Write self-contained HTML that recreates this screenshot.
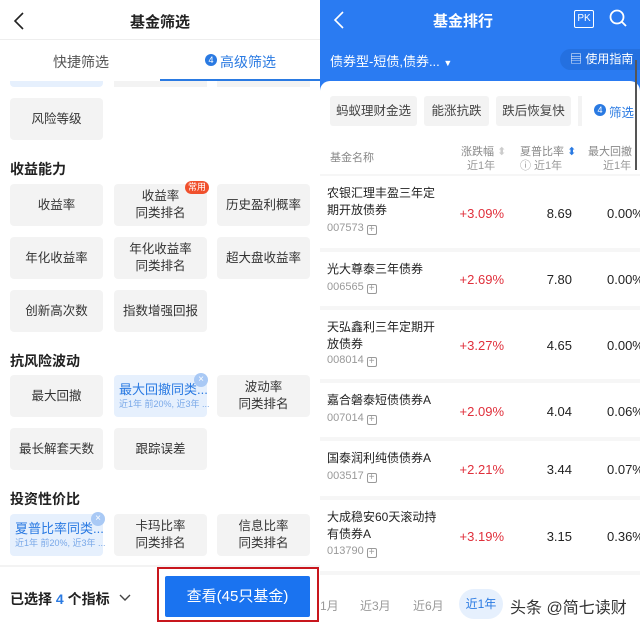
<!DOCTYPE html><html><head><meta charset="utf-8"><style>
*{margin:0;padding:0;box-sizing:border-box}
body{width:640px;height:630px;overflow:hidden;font-family:"Liberation Sans","Noto Sans CJK SC",sans-serif;background:#fff;position:relative}
.a{position:absolute}
.L{left:0;top:0;width:320px;height:630px;background:#fff;overflow:hidden}
.R{left:320px;top:0;width:320px;height:630px;background:#fff;overflow:hidden}
.t{position:absolute;width:93px;height:42px;background:#f3f3f3;border-radius:4px;font-size:12.5px;color:#333;display:flex;flex-direction:column;align-items:center;justify-content:center;line-height:17px;text-align:center}
.t.s{background:#e6f0fd;color:#2a7ae2;align-items:flex-start;padding-left:5px;text-align:left}
.t.s b{font-weight:normal;font-size:13px;white-space:nowrap;line-height:16px}
.t.s i{font-style:normal;font-size:9px;color:#79a8e8;line-height:12px;white-space:nowrap}
.x{position:absolute;width:14px;height:14px;border-radius:7px;background:#a9c9f5;color:#fff;font-size:10px;line-height:14px;text-align:center}
.h{position:absolute;left:10px;font-size:14px;font-weight:bold;color:#222}
.row{position:absolute;left:0;width:320px;border-bottom:4px solid #f6f6f6}
.nm{position:absolute;left:7px;font-size:12px;color:#222;line-height:17px;width:112px}
.cd{position:absolute;left:7px;font-size:11px;color:#999}
.cd span{display:inline-block;width:10px;height:10px;border:1px solid #999;border-radius:2px;font-size:10px;line-height:8px;text-align:center;margin-left:3px;vertical-align:-1px}
.p{position:absolute;right:136px;font-size:13px;color:#e0303c}
.v{position:absolute;right:68px;font-size:13px;color:#222}
.m{position:absolute;left:287px;font-size:13px;color:#222}
</style></head><body>
<div class="a L">
 <svg class="a" style="left:13px;top:12px" width="12" height="18" viewBox="0 0 12 18"><path d="M10 1L2 9l8 8" fill="none" stroke="#222" stroke-width="1.6"/></svg>
 <div class="a" style="left:0;width:320px;top:11px;text-align:center;font-size:15px;font-weight:bold;color:#222">基金筛选</div>
 <div class="a" style="left:0;top:39px;width:320px;height:1px;background:#eee"></div>
 <div class="a" style="left:53px;top:52px;font-size:14px;color:#555">快捷筛选</div>
 <div class="a" style="left:205px;top:54px;width:12px;height:12px;border-radius:6px;background:#2a7ae2;color:#fff;font-size:9px;line-height:12px;text-align:center">4</div>
 <div class="a" style="left:220px;top:52px;font-size:14px;color:#2a7ae2">高级筛选</div>
 <div class="a" style="left:160px;top:79px;width:160px;height:2px;background:#2a7ae2"></div>
 <div class="a" style="left:10px;top:81px;width:93px;height:6px;background:#e6f0fd;border-radius:0 0 4px 4px"></div>
 <div class="a" style="left:114px;top:81px;width:93px;height:6px;background:#f3f3f3"></div>
 <div class="a" style="left:217px;top:81px;width:93px;height:6px;background:#f3f3f3"></div>
 <div class="t" style="left:10px;top:98px">风险等级</div>
 <div class="h" style="top:159px">收益能力</div>
 <div class="t" style="left:10px;top:184px">收益率</div>
 <div class="t" style="left:114px;top:184px">收益率<br>同类排名</div>
 <div class="a" style="left:185px;top:181px;width:24px;height:13px;background:#f0502d;border-radius:7px;color:#fff;font-size:9px;line-height:13px;text-align:center">常用</div>
 <div class="t" style="left:217px;top:184px">历史盈利概率</div>
 <div class="t" style="left:10px;top:237px">年化收益率</div>
 <div class="t" style="left:114px;top:237px">年化收益率<br>同类排名</div>
 <div class="t" style="left:217px;top:237px">超大盘收益率</div>
 <div class="t" style="left:10px;top:290px">创新高次数</div>
 <div class="t" style="left:114px;top:290px">指数增强回报</div>
 <div class="h" style="top:351px">抗风险波动</div>
 <div class="t" style="left:10px;top:375px">最大回撤</div>
 <div class="t s" style="left:114px;top:375px"><b>最大回撤同类...</b><i>近1年 前20%, 近3年 ...</i></div>
 <div class="x" style="left:194px;top:373px">×</div>
 <div class="t" style="left:217px;top:375px">波动率<br>同类排名</div>
 <div class="t" style="left:10px;top:428px">最长解套天数</div>
 <div class="t" style="left:114px;top:428px">跟踪误差</div>
 <div class="h" style="top:489px">投资性价比</div>
 <div class="t s" style="left:10px;top:514px"><b>夏普比率同类...</b><i>近1年 前20%, 近3年 ...</i></div>
 <div class="x" style="left:91px;top:512px">×</div>
 <div class="t" style="left:114px;top:514px">卡玛比率<br>同类排名</div>
 <div class="t" style="left:217px;top:514px">信息比率<br>同类排名</div>
 <div class="a" style="left:0;top:565px;width:320px;height:2px;background:#f3f3f3"></div>
 <div class="a" style="left:10px;top:589px;font-size:14px;font-weight:bold;color:#222">已选择 <span style="color:#2a7ae2">4</span> 个指标</div>
 <svg class="a" style="left:119px;top:594px" width="12" height="8" viewBox="0 0 12 8"><path d="M1 1l5 5 5-5" fill="none" stroke="#444" stroke-width="1.4"/></svg>
 <div class="a" style="left:157px;top:567px;width:162px;height:55px;border:2px solid #c8161d"></div>
 <div class="a" style="left:165px;top:576px;width:145px;height:41px;background:#1a73f0;border-radius:2px;color:#fff;font-size:15px;line-height:41px;text-align:center">查看(45只基金)</div>
</div>
<div class="a R">
 <div class="a" style="left:0;top:0;width:320px;height:95px;background:#2a7bf2"></div>
 <svg class="a" style="left:13px;top:11px" width="12" height="18" viewBox="0 0 12 18"><path d="M10 1L2 9l8 8" fill="none" stroke="#fff" stroke-width="1.6"/></svg>
 <div class="a" style="left:0;width:286px;top:10px;text-align:center;font-size:15px;font-weight:bold;color:#fff">基金排行</div>
 <div class="a" style="left:254px;top:10px;width:20px;height:18px;border:1.5px solid #fff;border-radius:2px;color:#fff;font-size:10px;line-height:15px;text-align:center">PK</div>
 <svg class="a" style="left:289px;top:9px" width="18" height="20" viewBox="0 0 18 20"><circle cx="8" cy="8" r="6.5" fill="none" stroke="#fff" stroke-width="1.8"/><path d="M13 13l4 4" stroke="#fff" stroke-width="1.8"/></svg>
 <div class="a" style="left:10px;top:51px;font-size:13px;color:#fff">债券型-短债,债券... <span style="font-size:9px">▼</span></div>
 <div class="a" style="left:240px;top:49px;width:90px;height:21px;border-radius:11px;background:#2470e0;color:#fff;font-size:12px;line-height:21px;padding-left:10px">▤ 使用指南</div>
 <div class="a" style="left:0;top:81px;width:320px;height:80px;background:#fff;border-radius:10px 10px 0 0"></div>
 <div class="a" style="left:10px;top:96px;width:87px;height:30px;background:#f3f3f3;border-radius:3px;font-size:12.5px;color:#444;line-height:30px;text-align:center">蚂蚁理财金选</div>
 <div class="a" style="left:104px;top:96px;width:65px;height:30px;background:#f3f3f3;border-radius:3px;font-size:12.5px;color:#444;line-height:30px;text-align:center">能涨抗跌</div>
 <div class="a" style="left:176px;top:96px;width:75px;height:30px;background:#f3f3f3;border-radius:3px;font-size:12.5px;color:#444;line-height:30px;text-align:center">跌后恢复快</div>
 <div class="a" style="left:258px;top:96px;width:4px;height:30px;background:#f3f3f3"></div>
 <div class="a" style="left:274px;top:104px;width:12px;height:12px;border-radius:6px;background:#2a7ae2;color:#fff;font-size:9px;line-height:12px;text-align:center">4</div>
 <div class="a" style="left:289px;top:102px;font-size:12.5px;color:#2a7ae2">筛选</div>
 <div class="a" style="left:315px;top:60px;width:2px;height:110px;background:#555"></div>
 <div class="a" style="left:10px;top:149px;font-size:11px;color:#888">基金名称</div>
 <div class="a" style="left:141px;top:143px;font-size:11px;color:#888">涨跌幅 <span style="color:#ccc">⬍</span></div>
 <div class="a" style="left:147px;top:157px;font-size:11px;color:#999">近1年</div>
 <div class="a" style="left:200px;top:143px;font-size:11px;color:#888">夏普比率 <span style="color:#2a7ae2">⬍</span></div>
 <div class="a" style="left:200px;top:157px;font-size:11px;color:#999">ⓘ 近1年</div>
 <div class="a" style="left:268px;top:143px;font-size:11px;color:#888">最大回撤</div>
 <div class="a" style="left:283px;top:157px;font-size:11px;color:#999">近1年</div>
 <div class="a" style="left:0;top:174px;width:320px;height:2px;background:#f6f6f6"></div>

 <div class="row" style="top:176px;height:76px"><div class="nm" style="top:9px">农银汇理丰盈三年定期开放债券</div><div class="cd" style="top:46px">007573<span>+</span></div><div class="p" style="top:30px">+3.09%</div><div class="v" style="top:30px">8.69</div><div class="m" style="top:30px">0.00%</div></div>
 <div class="row" style="top:252px;height:58px"><div class="nm" style="top:9px">光大尊泰三年债券</div><div class="cd" style="top:29px">006565<span>+</span></div><div class="p" style="top:20px">+2.69%</div><div class="v" style="top:20px">7.80</div><div class="m" style="top:20px">0.00%</div></div>
 <div class="row" style="top:310px;height:73px"><div class="nm" style="top:9px">天弘鑫利三年定期开放债券</div><div class="cd" style="top:44px">008014<span>+</span></div><div class="p" style="top:28px">+3.27%</div><div class="v" style="top:28px">4.65</div><div class="m" style="top:28px">0.00%</div></div>
 <div class="row" style="top:383px;height:58px"><div class="nm" style="top:9px">嘉合磐泰短债债券A</div><div class="cd" style="top:29px">007014<span>+</span></div><div class="p" style="top:21px">+2.09%</div><div class="v" style="top:21px">4.04</div><div class="m" style="top:21px">0.06%</div></div>
 <div class="row" style="top:441px;height:59px"><div class="nm" style="top:9px">国泰润利纯债债券A</div><div class="cd" style="top:29px">003517<span>+</span></div><div class="p" style="top:21px">+2.21%</div><div class="v" style="top:21px">3.44</div><div class="m" style="top:21px">0.07%</div></div>
 <div class="row" style="top:500px;height:75px"><div class="nm" style="top:9px">大成稳安60天滚动持有债券A</div><div class="cd" style="top:45px">013790<span>+</span></div><div class="p" style="top:29px">+3.19%</div><div class="v" style="top:29px">3.15</div><div class="m" style="top:29px">0.36%</div></div>
 <div class="a" style="left:0;top:580px;width:320px;height:50px;background:#fff"></div>
 <div class="a" style="left:0;top:597px;font-size:12px;color:#999">1月</div>
 <div class="a" style="left:40px;top:597px;font-size:12px;color:#999">近3月</div>
 <div class="a" style="left:93px;top:597px;font-size:12px;color:#999">近6月</div>
 <div class="a" style="left:139px;top:589px;width:44px;height:30px;border-radius:15px;background:#e6f0fd;color:#2a7ae2;font-size:12px;line-height:30px;text-align:center">近1年</div>
 <div class="a" style="left:190px;top:594px;font-size:16px;color:#333">头条 @简七读财</div>
</div>
</body></html>
